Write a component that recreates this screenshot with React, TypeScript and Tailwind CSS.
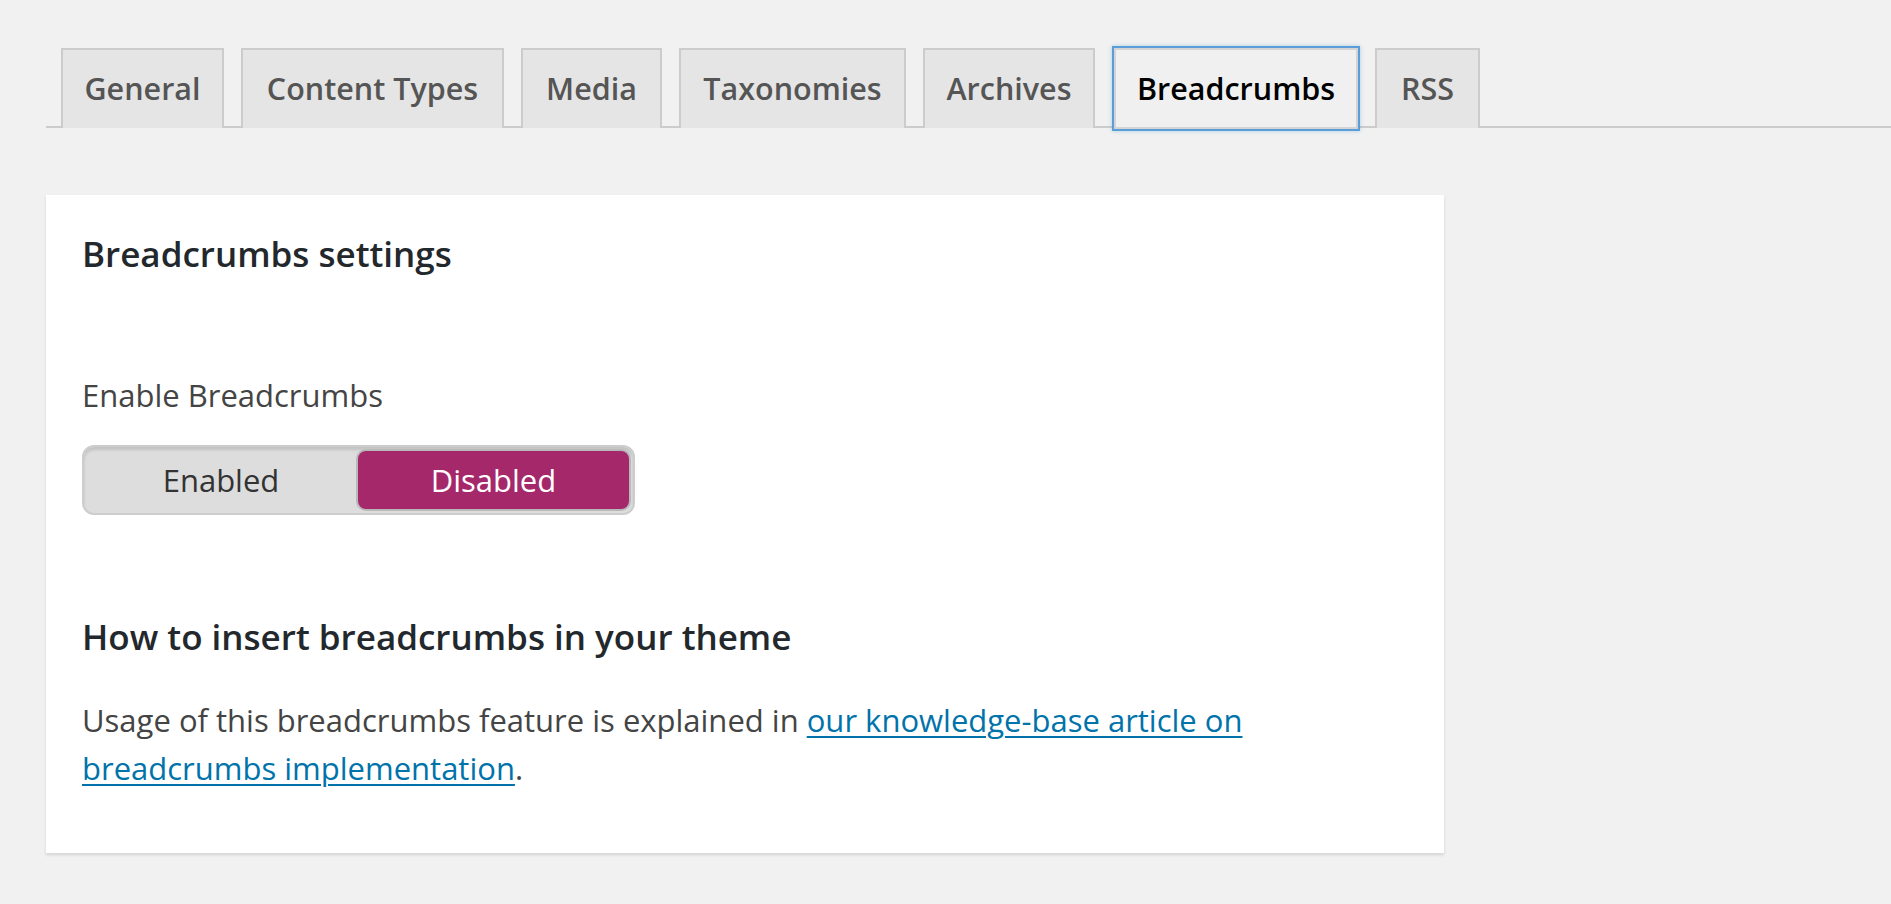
export default function App() {
  const tabs = [
    { label: "General", w: "w-[163px]" },
    { label: "Content Types", w: "w-[263px]" },
    { label: "Media", w: "w-[141px]" },
    { label: "Taxonomies", w: "w-[227px]" },
    { label: "Archives", w: "w-[172px]" },
    { label: "Breadcrumbs", w: "w-[244px]", active: true },
    { label: "RSS", w: "w-[105px] ml-[-2px]" },
  ];
  return (
    <div className="min-h-screen w-full bg-[#f1f1f1] font-['Open_Sans',sans-serif] pt-[48px] pl-[46px]">
      <div className="flex h-[80px] gap-[17px] border-b-2 border-[#cccccc] pl-[15px]">
        {tabs.map((t) =>
          t.active ? (
            <div
              key={t.label}
              className={`${t.w} relative mx-[2px] flex h-[81px] items-center justify-center border-2 border-[#d4d4d4] bg-[#f0f0f0] text-[30.5px] font-semibold text-black shadow-[0_0_0_2px_#5b9dd9,0_0_4px_2px_rgba(30,140,190,0.35)]`}
            >
              {t.label}
            </div>
          ) : (
            <div
              key={t.label}
              className={`${t.w} flex h-[80px] items-center justify-center border-2 border-b-0 border-[#cccccc] bg-[#e5e5e5] text-[30.5px] font-semibold text-[#555555]`}
            >
              {t.label}
            </div>
          )
        )}
      </div>

      <div className="mt-[67px] w-[1398px] bg-white px-[36px] pt-[33px] pb-[61px] shadow-[0_2px_3px_rgba(0,0,0,0.12)]">
        <h2 className="text-[35px] font-semibold leading-[52px] text-[#23282d]">Breadcrumbs settings</h2>

        <div className="mt-[93px] text-[31px] leading-[44px] text-[#444444]">Enable Breadcrumbs</div>

        <div className="mt-[28px] flex h-[70px] w-[553px] items-stretch rounded-[12px] border-2 border-[#cdcdcd] bg-[#dddddd] p-[2px] shadow-[inset_0_3px_3px_rgba(0,0,0,0.12)]">
          <div className="flex flex-1 items-center justify-center text-[31px] text-[#333333]">Enabled</div>
          <div className="flex w-[275px] items-center justify-center rounded-[10px] border-2 border-[#b9b9b9] bg-[#a4286a] text-[31px] text-white">
            Disabled
          </div>
        </div>

        <h3 className="mt-[96px] text-[35px] font-semibold leading-[52px] text-[#23282d]">
          How to insert breadcrumbs in your theme
        </h3>

        <p className="mt-[33px] text-[31px] leading-[48px] text-[#444444]">
          Usage of this breadcrumbs feature is explained in{" "}
          <a href="#" className="text-[#0073aa] underline decoration-2 underline-offset-[4px]">
            our knowledge-base article on breadcrumbs implementation
          </a>
          .
        </p>
      </div>
    </div>
  );
}
